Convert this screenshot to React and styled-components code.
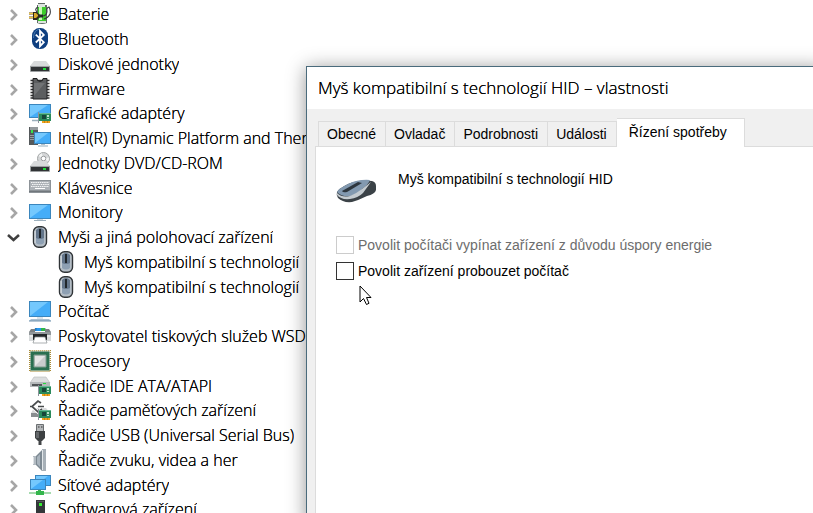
import React, { useState } from 'react';
import styled, { createGlobalStyle, css } from 'styled-components';

const GlobalStyle = createGlobalStyle`
  body {
    margin: 0;
    background: #fff;
    color: #000;
    overflow: hidden;
  }
  * {
    box-sizing: border-box;
  }
`

const Desktop = styled.main`
  position: relative;
  height: 100vh;
  overflow: hidden;
`

// the shadow darkens the thin strokes of the light face
const lightText = css`
  font-family: "Open Sans", "Noto Sans", sans-serif;
  font-weight: 300;
  text-shadow: 0 0 0 #000;
`

const Tree = styled.ul`
  width: 306px;
  margin: 0;
  padding: 2px 0 0 6px;
  overflow: hidden;
  list-style: none;
  font-size: 16px;
  line-height: 25px;
  ${lightText}
`

const TreeRow = styled.li`
  display: flex;
  align-items: flex-start;
  height: 25px;
  padding-left: ${props => props.$depth * 26}px;
  white-space: nowrap;

  &:nth-child(4n) {
    height: 24px;
  }
`

const Expander = styled.button`
  display: flex;
  flex: none;
  align-items: center;
  justify-content: center;
  width: 15px;
  height: 25px;
  margin-right: 8px;
  padding: 0;
  border: 0;
  background: none;
  color: ${props => props.$open ? '#404040' : '#a6a6a6'};
`

const ExpanderSpace = styled.span`
  flex: none;
  width: 23px;
`

const DeviceIcon = styled.svg`
  flex: none;
  width: 22px;
  height: 23px;
  margin: 1px 7px 0 0;
`

const DeviceName = styled.span`
  overflow: hidden;
`

const Dialog = styled.section`
  position: absolute;
  top: 66px;
  right: -12px;
  bottom: -12px;
  left: 306px;
  display: flex;
  flex-direction: column;
  border: 1px solid #4a6b7c;
  background: #f0f0f0;
  box-shadow: 0 2px 18px rgba(0, 0, 0, .42);
  font: 14px/18px "Liberation Sans", Arial, sans-serif;
`

const Title = styled.h1`
  margin: 0;
  padding: 9px 11px;
  background: #fff;
  font-size: 17px;
  line-height: 24px;
  white-space: nowrap;
  ${lightText}
`

const TabList = styled.div`
  display: flex;
  align-items: flex-end;
  padding: 9px 11px 0;
`

const Tab = styled.button`
  height: 25px;
  padding: 0 9px 0 8px;
  border: 1px solid #dcdcdc;
  border-width: 1px 1px 0 0;
  background: #f0f0f0;
  color: #000;
  font: inherit;
  white-space: nowrap;

  &:first-child {
    border-left-width: 1px;
  }

  ${props => props.$active && css`
    position: relative;
    height: 29px;
    margin-bottom: -1px;
    padding: 0 17px 2px 12px;
    background: #fff;
  `}
`

const Panel = styled.div`
  flex: 1;
  margin-left: 8px;
  padding: 23px 20px;
  border: 1px solid #dcdcdc;
  background: #fff;
`

const Device = styled.div`
  display: flex;
  gap: 22px;
  margin-bottom: 22px;
`

const BigMouse = styled.svg`
  width: 40px;
  height: 40px;
`

const Option = styled.label`
  display: flex;
  align-items: center;
  gap: 4px;
  height: 26px;
  color: ${props => props.$disabled ? '#6d6d6d' : '#000'};
  white-space: nowrap;
`

const Checkbox = styled.input`
  appearance: none;
  width: 18px;
  height: 18px;
  margin: 0;
  border: 1px solid #333;
  background: #fff;

  &:disabled {
    border-color: #ccc;
  }
  &:checked {
    background: #333;
    box-shadow: inset 0 0 0 3px #fff;
  }
`

const Pointer = styled.svg`
  position: absolute;
  top: 285px;
  left: 359px;
  width: 13px;
  height: 21px;
  pointer-events: none;
`

const Screen = ({ x, y, w, h }) => (
  <g>
    <rect x={x} y={y} width={w} height={h} fill="#3b86bd" />
    <rect x={x + 1} y={y + 1} width={w - 2} height={h - 2} fill="#45adf8" />
    <path d={`M${x + 1} ${y + 1}h${w - 4}L${x + 1} ${y + h - 1}z`} fill="#74c8fd" />
  </g>
)

const Card = ({ x, y }) => (
  <g transform={`translate(${x} ${y})`}>
    <path d="M.5 0v11" stroke="#8b9299" />
    <path d="M1 1h12v8H1z" fill="#2b8a5c" />
    <path d="M1 1h12v1H1z" fill="#67b895" />
    <path d="M4 3h4v4H4z" fill="#17463a" />
    <path d="M9 3h2v2H9zM9 6h2v1H9z" fill="#b8dfc9" />
    <path d="M4 9h8v2H4z" fill="#f0a41e" />
    <path d="M6.5 9v2M9.5 9v2" stroke="#a96f12" strokeWidth=".6" />
  </g>
)

const Drive = ({ y }) => (
  <g transform={`translate(0 ${y})`}>
    <path d="M5 0h12l4 5H1z" fill="#d8dadb" />
    <path d="M1 5h20v5q0 1-1 1H2q-1 0-1-1z" fill="#9da0a2" />
    <path d="M2 6h18v4H2z" fill="#303335" />
    <path d="M14 7h3v2h-3z" fill="#21dc3a" />
  </g>
)

const icons = {
  battery: (
    <>
      <path d="M9 0h7v2h2v18q-5 2-10 0V2h1z" fill="#606a65" />
      <path d="M9 4h8v14H9z" fill="#3ccc2c" />
      <path d="M10 4h3v13h-3z" fill="#c8f7b4" />
      <path d="M9 1h7v3H9zM9 18h8v2H9z" fill="#dce4de" />
      <path d="M13 13q5 0 5-5-1-3 2-4 2 3 1 7-2 4-6 5M8 9Q5 6 9 4" fill="none" stroke="#34383b" strokeWidth="1.1" />
      <path d="M0 10.5h4M0 14.5h4" stroke="#6b4d12" strokeWidth="2" />
      <path d="M0 10.5h4M0 14.5h4" stroke="#f0ca48" />
      <path d="M4 9h4l3 3v2l-3 3H4z" fill="#2f2a1d" />
      <path d="M5 10h2l2 2v1l-2 2H5z" fill="#d8a82b" />
      <path d="M10 13h4" stroke="#25292b" strokeWidth="3" />
    </>
  ),
  bluetooth: (
    <>
      <rect x="3" y="0" width="16" height="21" rx="7.5" fill="#0f3f80" />
      <path d="M4.5 10q0-8 6.5-9" fill="none" stroke="#4478b0" />
      <path d="M6.8 6.7l8 7.5-3.800 4V3l3.800 4-8 7.5" fill="none" stroke="#fff" strokeWidth="1.8" />
    </>
  ),
  disk: <Drive y={8} />,
  firmware: (
    <>
      <path d="M1.5 2.5h19M1.5 5.5h19M1.5 8.5h19M1.5 11.5h19M1.5 14.5h19M1.5 17.5h19M1.5 20h19" stroke="#333" strokeWidth="1.5" />
      <path d="M4 .5h4q0 3 3 3t3-3h4v20.5H4z" fill="#5c5e60" stroke="#202122" />
      <path d="M5 5h11L5 18z" fill="#707274" />
    </>
  ),
  graphics: (
    <>
      <Screen x={0} y={2} w={22} h={14} />
      <path d="M3 18.5h7" stroke="#9bafbc" strokeWidth="1.5" />
      <Card x={9} y={10} />
    </>
  ),
  platform: (
    <>
      <path d="M0 0h9v18H0z" fill="#55595b" />
      <path d="M1 0h8v3H1z" fill="#949a9d" />
      <path d="M2 3h2v3H2z" fill="#36e24a" />
      <path d="M1 8.5h4M1 10.5h4M1 12.5h4" stroke="#969da1" />
      <Screen x={5} y={5} w={17} h={12} />
      <path d="M12 17h4v1h-4z" fill="#b4c1c9" />
      <path d="M9 19h10" stroke="#96adbc" />
    </>
  ),
  dvd: (
    <>
      <circle cx="14.5" cy="6.5" r="6" fill="#d4d6d7" stroke="#a1a4a5" />
      <path d="M14.5 6.5L9.5 4l3-3zM14.5 6.5l5 3 .5-4z" fill="#f3f4f4" />
      <circle cx="14.5" cy="6.5" r="2.3" fill="#fff" stroke="#9b9d9f" />
      <Drive y={9} />
    </>
  ),
  keyboard: (
    <>
      <path d="M0 3h22v13H0z" fill="#8d9398" />
      <path d="M1 4h20v9H1z" fill="#adb2b7" />
      <path d="M2 5.5h18M3 7.5h17M2 9.5h18" stroke="#f4f5f6" strokeDasharray="1.5 .7" />
      <path d="M6 11.5h10" stroke="#fff" />
      <path d="M0 14.5h22" stroke="#71777c" />
    </>
  ),
  monitor: (
    <>
      <Screen x={0} y={3} w={22} h={15} />
      <path d="M8 18h6v1H8z" fill="#c9d5de" />
      <path d="M5 19.5h12" stroke="#9cb0bd" />
    </>
  ),
  mouse: (
    <>
      <rect x="4.5" y=".7" width="13" height="20.5" rx="5" fill="#b5bec6" stroke="#303437" strokeWidth="1.4" />
      <path d="M7 4q4-4 8 0v12q-4 4-8 0z" fill="#63758a" />
      <path d="M7 12q4 2 8 0v5q-4 3-8 0z" fill="#8ea0b3" />
      <path d="M11 3v9" stroke="#20262b" strokeWidth="2" />
      <path d="M6 5v12" stroke="#e6eaed" strokeWidth=".8" />
    </>
  ),
  computer: (
    <>
      <Screen x={0} y={1} w={22} h={16} />
      <path d="M8 17h6v2H8z" fill="#d9e3ea" />
      <path d="M2 19h18l2 2H0z" fill="#a9bfd1" />
      <path d="M0 21h22" stroke="#6f92ae" />
    </>
  ),
  printer: (
    <>
      <path d="M5 6l1-3h10l2 3z" fill="#287cc1" />
      <path d="M8 3h4v3H7z" fill="#2797ee" />
      <path d="M12 3h4l1 3h-5z" fill="#30b84a" />
      <path d="M2 4h4v3H0zM16 4h4l2 3h-6z" fill="#7b8184" />
      <path d="M0 7h22v9H0z" fill="#d7dadb" />
      <path d="M0 7h22v3H0z" fill="#92989b" />
      <path d="M4 9h14v6H4z" fill="#24282a" />
      <path d="M6 12h10l2 6H4z" fill="#fff" stroke="#8b9194" strokeWidth=".7" />
      <path d="M1 11h3M18 11h3" stroke="#f7f8f8" />
    </>
  ),
  processor: (
    <>
      <rect x=".7" y=".7" width="20.6" height="20.6" fill="none" stroke="#a98a35" strokeWidth="1.4" strokeDasharray="1 1" />
      <path d="M1.5 1.5h19v19h-19z" fill="#296f50" />
      <path d="M5 5h12v12H5z" fill="#c9cccd" stroke="#7c9a8c" />
      <path d="M6 6h10L6 16z" fill="#e5e6e6" />
    </>
  ),
  ide: (
    <>
      <path d="M5 2h12l4 6H1z" fill="#dcdedf" stroke="#b7b9bb" strokeWidth=".6" />
      <path d="M1 7h20v5H1z" fill="#b4b8ba" />
      <path d="M3 9h10v2H3z" fill="#505457" />
      <path d="M14 8h3v1h-3z" fill="#21dc3a" />
      <Card x={9} y={10} />
    </>
  ),
  storage: (
    <>
      <path d="M5 9h12l4 5v4H2v-4z" fill="#d7d9da" />
      <path d="M2 14h9v4H2z" fill="#888d90" />
      <path d="M15 7.5H9M9 2L3 7.5 9 13l4-3" fill="none" stroke="#fff" strokeWidth="3.5" />
      <path d="M15 7.5H9M12 4L9 2 3 7.5 9 13l4-3M3 7.5H1" fill="none" stroke="#484b4d" strokeWidth="1.7" />
      <Card x={9} y={10} />
    </>
  ),
  usb: (
    <>
      <path d="M7.5.5h7v7h-7z" fill="#b4b7b9" stroke="#6c7072" />
      <path d="M9 3h1.5M12 3h1.5" stroke="#333" />
      <path d="M6 7h10v7l-3 3H9l-3-3z" fill="#3d4042" />
      <path d="M7 8h3v6H7z" fill="#64676a" />
      <path d="M9.5 16h3v5h-3z" fill="#424547" />
    </>
  ),
  speaker: (
    <>
      <path d="M4 7h4v9H4z" fill="#b2bac1" />
      <path d="M7 7l6-6v21l-6-6z" fill="#7d8992" />
      <path d="M8 8l3-3v13l-3-3z" fill="#a9b4bd" />
      <path d="M13 0h4v22h-4z" fill="#a7b0b7" />
      <path d="M13 1h1v20h-1z" fill="#e1e6e9" />
      <path d="M4 8h1v7H4z" fill="#dfe3e6" />
    </>
  ),
  network: (
    <>
      <Screen x={6} y={1} w={16} h={11} />
      <Screen x={1} y={5} w={16} h={11} />
      <path d="M9 16h3v2H9z" fill="#3eb454" />
      <path d="M0 19h22" stroke="#a5dbae" strokeWidth="2" />
      <path d="M7 17h8v4H7z" fill="#34b64c" />
    </>
  ),
  software: (
    <>
      <path d="M7 2h9v20H7z" fill="#34373a" />
      <path d="M8 3h7v1H8z" fill="#54585b" />
      <path d="M10 5h3v3h-3z" fill="#36ed35" />
    </>
  ),
}

const devices = [
  ['battery', 'Baterie'],
  ['bluetooth', 'Bluetooth'],
  ['disk', 'Diskové jednotky'],
  ['firmware', 'Firmware'],
  ['graphics', 'Grafické adaptéry'],
  ['platform', 'Intel(R) Dynamic Platform and Thermal'],
  ['dvd', 'Jednotky DVD/CD-ROM'],
  ['keyboard', 'Klávesnice'],
  ['monitor', 'Monitory'],
  ['mouse', 'Myši a jiná polohovací zařízení', 'open'],
  ['mouse', 'Myš kompatibilní s technologií', 'child'],
  ['mouse', 'Myš kompatibilní s technologií', 'child'],
  ['computer', 'Počítač'],
  ['printer', 'Poskytovatel tiskových služeb WSD'],
  ['processor', 'Procesory'],
  ['ide', 'Řadiče IDE ATA/ATAPI'],
  ['storage', 'Řadiče paměťových zařízení'],
  ['usb', 'Řadiče USB (Universal Serial Bus)'],
  ['speaker', 'Řadiče zvuku, videa a her'],
  ['network', 'Síťové adaptéry'],
  ['software', 'Softwarová zařízení'],
]

const tabs = ['Obecné', 'Ovladač', 'Podrobnosti', 'Události', 'Řízení spotřeby']

const Chevron = ({ open }) => (
  <svg width="15" height="15" viewBox="0 0 15 15" fill="none" stroke="currentColor" strokeWidth="2.6" aria-hidden="true">
    <path d={open ? 'M2 5l5.5 5L13 5' : 'M5 3l5 5-5 5'} />
  </svg>
)

const DeviceRow = ({ icon, name, kind }) => (
  <TreeRow $depth={kind === 'child' ? 1 : 0}>
    {kind === 'child' ? <ExpanderSpace /> : (
      <Expander $open={kind === 'open'} aria-label={name} aria-expanded={kind === 'open'}>
        <Chevron open={kind === 'open'} />
      </Expander>
    )}
    <DeviceIcon viewBox="0 0 22 23" aria-hidden="true">{icons[icon]}</DeviceIcon>
    <DeviceName>{name}</DeviceName>
  </TreeRow>
)

const App = () => {
  const [wake, setWake] = useState(false)

  return (
    <Desktop>
      <GlobalStyle />
      <Tree>
        {devices.map(([icon, name, kind], i) => (
          <DeviceRow key={i} icon={icon} name={name} kind={kind} />
        ))}
      </Tree>
      <Dialog role="dialog" aria-labelledby="title">
        <Title id="title">Myš kompatibilní s technologií HID – vlastnosti</Title>
        <TabList role="tablist">
          {tabs.map((tab, i) => (
            <Tab key={tab} role="tab" $active={i === 4} aria-selected={i === 4}>{tab}</Tab>
          ))}
        </TabList>
        <Panel role="tabpanel">
          <Device>
            <BigMouse viewBox="0 0 40 40" aria-hidden="true">
              <path d="M1 22q1-3 11-8 11-5 24-3 4 1 4 5v4q-1 4-9 6-8 4-15 6-9 1-14-4-2-3-1-6z" fill="#3b4247" />
              <path d="M1 22q1-3 11-8 11-5 22-4-2 5-8 9-3 4-11 7-10 1-14-4z" fill="#8299b0" />
              <path d="M1 23q5 5 13 3 7-3 12-7l9-7-8 11q-5 5-13 6-9 1-13-4z" fill="#c4cbd0" />
              <path d="M6 21l16-9 4 1-15 9q-4 1-5-1z" fill="#2d363e" />
            </BigMouse>
            <span>Myš kompatibilní s technologií HID</span>
          </Device>
          <Option $disabled>
            <Checkbox type="checkbox" disabled />
            Povolit počítači vypínat zařízení z důvodu úspory energie
          </Option>
          <Option>
            <Checkbox type="checkbox" checked={wake} onChange={e => setWake(e.target.checked)} />
            Povolit zařízení probouzet počítač
          </Option>
        </Panel>
      </Dialog>
      <Pointer viewBox="0 0 13 21" aria-hidden="true">
        <path d="M1 1v16l3.5-3.5L7.5 19.5l2.5-1.2L7.5 12.5H12z" fill="#fff" stroke="#000" />
      </Pointer>
    </Desktop>
  )
}

export default App;
